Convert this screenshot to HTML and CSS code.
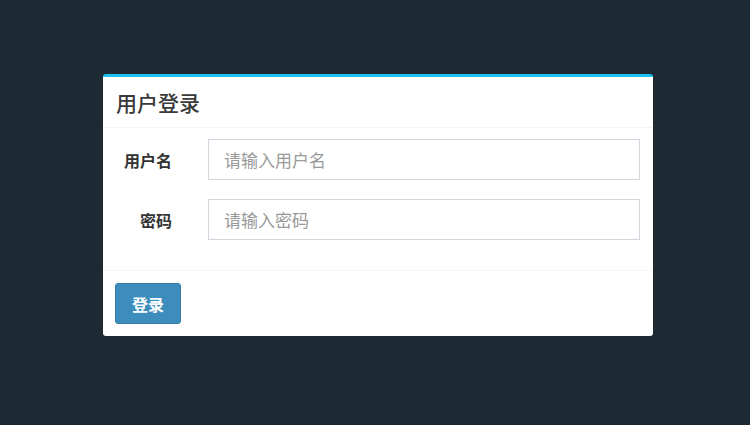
FILE: index.html
```html
<!DOCTYPE html>
<html lang="zh-CN">
<head>
    <meta charset="UTF-8">
    <meta name="viewport" content="width=device-width, initial-scale=1.0">
    <title>用户登录</title>
    <link rel="stylesheet" href="styles.css">
</head>
<body>
    <div class="box">
        <div class="box-header">
            <h3 class="box-title">用户登录</h3>
        </div>
        <form class="form">
            <div class="box-body">
                <div class="form-row">
                    <label for="username">用户名</label>
                    <input type="text" id="username" placeholder="请输入用户名">
                </div>
                <div class="form-row">
                    <label for="password">密码</label>
                    <input type="password" id="password" placeholder="请输入密码">
                </div>
            </div>
            <div class="box-footer">
                <button type="submit" class="btn">登录</button>
            </div>
        </form>
    </div>
</body>
</html>
```

FILE: styles.css
```css
body {
    background-color: #1e2a33;
    margin: 0;
    font-family: "Noto Sans CJK SC", "Noto Sans", sans-serif;
    color: #333;
}
.box {
    width: 550px;
    margin: 74px 0 0 103px;
    background-color: #fff;
    border-top: 3px solid #1ec0ef;
    border-radius: 3px;
}
.box-header {
    height: 50px;
    display: flex;
    align-items: center;
    padding: 0 13px;
    border-bottom: 1px solid #f4f4f4;
}
.box-title {
    margin: 0;
    font-size: 21px;
    font-weight: 500;
    line-height: 1;
    color: #3a3a3a;
}
.box-body {
    padding: 11px 13px 0;
    display: flex;
    flex-direction: column;
    gap: 19px;
    height: 143px;
    box-sizing: border-box;
    border-bottom: 1px solid #f4f4f4;
}
.form-row {
    display: grid;
    grid-template-columns: 56px 1fr;
    gap: 36px;
    align-items: center;
}
.form-row label {
    text-align: right;
    font-size: 16px;
    font-weight: bold;
}
.form-row input {
    height: 41px;
    box-sizing: border-box;
    border: 1px solid #d2d6de;
    padding: 0 15px;
    font-size: 17px;
    font-family: inherit;
    outline: none;
}
.form-row input::placeholder {
    color: #999;
}
.box-footer {
    padding: 12px;
}
.btn {
    height: 41px;
    padding: 0 16px;
    font-size: 16px;
    font-weight: bold;
    font-family: inherit;
    color: #fff;
    background-color: #3c8dbc;
    border: 1px solid #367fa9;
    border-radius: 3px;
    cursor: pointer;
}
```
